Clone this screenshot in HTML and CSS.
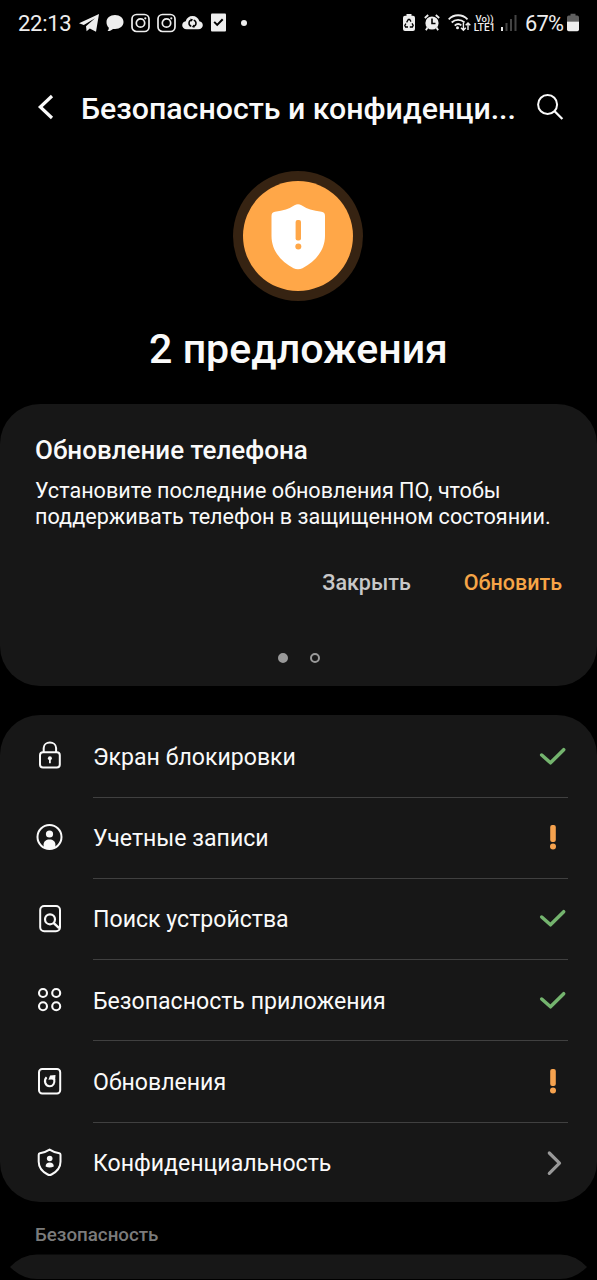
FILE: index.html
```html
<!DOCTYPE html>
<html lang="ru">
<head>
<meta charset="utf-8">
<title>Безопасность и конфиденциальность</title>
<link rel="stylesheet" href="styles.css">
</head>
<body>
<div class="screen">
  <div class="status">
    <span class="time">22:13</span>
    <svg class="telegram" width="20" height="20" viewBox="0 0 20 20"><path fill="currentColor" d="M0 10.300 20 1l-3 17.700-6.200-3.300-3.200 2.800-.6-5L16 5.300 4.800 12z"/></svg>
    <svg class="chat" width="18" height="20" viewBox="0 0 18 20"><path fill="currentColor" d="M9 2c5 0 8.500 3 8.500 7s-3.500 7-8.500 7L7 15.900C5.500 17.300 3.500 18.200 1.500 18c1-1 1.500-2.200 1.200-3.500C1.200 13.200.5 11.300.5 9 .5 5 4 2 9 2z"/></svg>
    <svg class="insta" width="19" height="20" viewBox="0 0 19 20"><g fill="none" stroke="currentColor" stroke-width="1.700"><rect x="1" y="1.500" width="17" height="17" rx="4.500"/><circle cx="9.500" cy="10" r="4.200"/></g><circle cx="14.300" cy="5.300" r="1.100" fill="currentColor"/></svg>
    <svg class="insta" width="19" height="20" viewBox="0 0 19 20"><g fill="none" stroke="currentColor" stroke-width="1.700"><rect x="1" y="1.500" width="17" height="17" rx="4.500"/><circle cx="9.500" cy="10" r="4.200"/></g><circle cx="14.300" cy="5.300" r="1.100" fill="currentColor"/></svg>
    <svg class="cloud" width="21" height="20" viewBox="0 0 21 20"><path fill="currentColor" d="M4.700 16.200C2 16.200.2 14.500.2 12.200c0-2.200 1.500-3.600 3.500-3.900C4.500 5 7.200 3 10.500 3s6 2 6.800 5.300c2 .3 3.500 1.700 3.500 3.900 0 2.300-1.800 4-4.500 4z"/><path fill="none" stroke="#000" stroke-width="1.500" d="M9.500 6.900c-3.300.7-3.300 5.400-.2 6.300M11.500 13.400c3.300-.7 3.300-5.400.2-6.300"/><path d="M8.400 5.600l2.700.8-1.800 2.400zM12.600 14.700l-2.700-.8 1.800-2.400z"/></svg>
    <svg class="clip" width="15" height="20" viewBox="0 0 15 20"><path fill="currentColor" d="M1 .5h13q1 0 1 1V17.500q0 1-1 1H1q-1 0-1-1V1.500q0-1 1-1z"/><path fill="none" stroke="#000" stroke-width="2" d="m3.200 8.900 3 3 5.500-5.700"/></svg>
    <i class="more"></i>
    <span class="spacer"></span>
    <svg class="saver" width="12" height="20" viewBox="0 0 12 20"><path fill="currentColor" d="M3.500 1h5v1.800H10q2 0 2 2V16q0 2-2 2H2q-2 0-2-2V4.800q0-2 2-2h1.500z"/><path fill="none" stroke="#000" stroke-width="1.300" d="m3.600 9.300 1.700-2.800h1.400l1.300 2.200M9 10.300l1.200 2-.8 1.700H6.800M5 14H2.600l-.8-1.500 1.100-1.900"/></svg>
    <svg class="alarm" width="16" height="20" viewBox="0 0 16 20"><circle cx="8" cy="10" r="6.600" fill="currentColor"/><path stroke="currentColor" stroke-width="1.800" d="m.8 5 3.400-3M15.200 5l-3.400-3M3.500 14.500l-1.600 2.800M12.500 14.500l1.600 2.800"/><path fill="none" stroke="#000" stroke-width="1.600" d="M8 5.500v5h3.500"/></svg>
    <svg class="wifi" width="23" height="20" viewBox="0 0 23 20"><g fill="none" stroke="currentColor" stroke-width="1.800"><path d="M.7 6.300c5.200-5.400 13.600-5.400 18.800 0M3.700 9.500c3.600-3.600 9.200-3.600 12.800 0M6.700 12.600c2-1.800 4.800-1.800 6.700-.2"/></g><circle cx="9.500" cy="14.800" r="1.500" fill="currentColor"/><path fill="none" stroke="currentColor" stroke-width="1.400" d="M15.400 10v7M13 14.700l2.400 2.500 2.400-2.500M20 17v-7M17.700 12.300l2.300-2.400 2.300 2.400"/></svg>
    <span class="volte"><span class="vo">Vo))</span><span class="lte">LTE1</span></span>
    <svg class="signal" width="16" height="20" viewBox="0 0 16 20"><path fill="currentColor" d="M0 14h2v4H0z"/><path fill="#444" d="M4.500 10h2v8h-2zM9 6h2v12H9zM13.500 2h2v16h-2z"/></svg>
    <span class="percent">67%</span>
    <svg class="battery" width="12" height="20" viewBox="0 0 12 20"><path fill="#606060" d="M3.500.8h5v1.800h1.700q1.800 0 1.800 2V8.500H0V4.600q0-2 1.800-2h1.700z"/><path fill="currentColor" d="M0 8.500h12v8q0 1.700-1.700 1.700H1.700Q0 18.200 0 16.500z"/></svg>
  </div>

  <header class="header">
    <svg class="back" width="20" height="30" viewBox="0 0 20 30"><path fill="none" stroke="currentColor" stroke-width="3.200" d="M18 4 6.300 15 18 26"/></svg>
    <h1>Безопасность и конфиденци...</h1>
    <svg class="search" width="28" height="28" viewBox="0 0 28 28"><circle cx="11.600" cy="11.500" r="9.500" fill="none" stroke="currentColor" stroke-width="2"/><path stroke="currentColor" stroke-width="2.300" d="m18.600 18.200 7.800 7.800"/></svg>
  </header>

  <section class="summary">
    <svg width="130" height="130" viewBox="0 0 130 130"><circle cx="65" cy="65" r="65" fill="#362312"/><circle cx="65" cy="65" r="55" fill="#ffa748"/><path fill="#fff" d="M61.500 34.300Q65 32 68.500 34.300 76 39.500 88.500 40.800 92 41.200 92 45v20c0 14-9.500 25.500-22.500 32.200q-4.500 2.300-9 0C47.500 90.500 38.500 79 38.500 65V45q0-3.800 3.500-4.200Q54 39.500 61.500 34.300z"/><rect x="62.600" y="49" width="5.400" height="20.500" rx="2" fill="#ffa748"/><circle cx="65.300" cy="75.600" r="3" fill="#ffa748"/></svg>
    <h2>2 предложения</h2>
  </section>

  <section class="card update">
    <h3>Обновление телефона</h3>
    <p>Установите последние обновления ПО, чтобы<br>поддерживать телефон в защищенном состоянии.</p>
    <div class="actions"><button class="dismiss">Закрыть</button><button class="accept">Обновить</button></div>
    <div class="pager"><i class="page current"></i><i class="page"></i></div>
  </section>

  <ul class="card list">
    <li>
      <svg class="lead" viewBox="0 0 30 30"><g fill="none" stroke="currentColor" stroke-width="2"><rect x="5" y="11.300" width="19.800" height="15.300" rx="3"/><path d="M8.700 11.300V7c0-7.200 12.400-7.200 12.400 0v4.300"/></g><circle cx="14.900" cy="17.300" r="2" fill="currentColor"/><path stroke="currentColor" stroke-width="1.800" d="M14.900 18v4.200"/></svg>
      <div class="row"><span>Экран блокировки</span><svg class="mark"><use href="#check"/></svg></div>
    </li>
    <li>
      <svg class="lead" viewBox="0 0 30 30"><circle cx="14.500" cy="15" r="12" fill="none" stroke="currentColor" stroke-width="2"/><circle cx="14.500" cy="12" r="3.600" fill="currentColor"/><path fill="currentColor" d="M8.600 25.300v-2.800c0-3 2.500-5 5.900-5s5.900 2 5.900 5v2.800Q14.500 28.500 8.600 25.300z"/></svg>
      <div class="row"><span>Учетные записи</span><svg class="mark"><use href="#alert"/></svg></div>
    </li>
    <li>
      <svg class="lead" viewBox="0 0 30 30"><g fill="none" stroke="currentColor" stroke-width="2"><rect x="5.200" y="2" width="19.800" height="25.300" rx="4"/><circle cx="15" cy="15.300" r="5" stroke-width="2.200"/><path stroke-width="2.400" d="m18.500 18.800 5.700 5.400"/></g></svg>
      <div class="row"><span>Поиск устройства</span><svg class="mark"><use href="#check"/></svg></div>
    </li>
    <li>
      <svg class="lead" viewBox="0 0 30 30"><g fill="none" stroke="currentColor" stroke-width="2.100"><circle cx="8" cy="8" r="4"/><circle cx="21.200" cy="8" r="4"/><circle cx="8" cy="21.200" r="4"/><circle cx="21.200" cy="21.200" r="4"/></g></svg>
      <div class="row"><span>Безопасность приложения</span><svg class="mark"><use href="#check"/></svg></div>
    </li>
    <li>
      <svg class="lead" viewBox="0 0 30 30"><rect x="4" y="3" width="21.200" height="24.500" rx="3.200" fill="none" stroke="currentColor" stroke-width="2"/><path fill="none" stroke="currentColor" stroke-width="2.100" d="M11.600 11.200c-3.200 3.200-1.400 9.100 3.100 9.100 3.400 0 5.300-3.200 4.500-7"/><path fill="currentColor" d="m20.500 8.900-5.400.6-1.700 4.300 3-.4 3.700.9z"/></svg>
      <div class="row"><span>Обновления</span><svg class="mark"><use href="#alert"/></svg></div>
    </li>
    <li>
      <svg class="lead" viewBox="0 0 30 30"><path fill="none" stroke="currentColor" stroke-width="2" d="M14.600 2.700Q19 5.600 24.300 6.200q1.200.2 1.200 1.500v7c0 6-4.200 10.300-9 12.800q-1.900 1-3.800 0c-4.800-2.500-9-6.800-9-12.800v-7q0-1.300 1.200-1.500Q10.200 5.600 14.600 2.700z"/><circle cx="14.700" cy="11.500" r="2.800" fill="currentColor"/><path fill="currentColor" d="M10.600 19.500c0-2.600 1.600-4 4.100-4s4.100 1.400 4.100 4q-4.100 1.800-8.200 0z"/></svg>
      <div class="row"><span>Конфиденциальность</span><svg class="mark" viewBox="0 0 30 30"><path fill="none" stroke="#999" stroke-width="3.200" stroke-linecap="round" stroke-linejoin="round" d="m11.300 5 10.200 10.200L11.300 25.400"/></svg></div>
    </li>
  </ul>

  <h4>Безопасность</h4>
  <svg class="next" width="597" height="26" viewBox="0 0 597 26"><path fill="#171717" d="M10 13Q22 .5 37 .5H560Q575 .5 587 13 575 25 560 25H37Q22 25 10 13z"/></svg>
</div>

<svg class="defs" width="0" height="0">
  <symbol id="check" viewBox="0 0 30 30"><path fill="none" stroke="#74b46e" stroke-width="3.500" stroke-linecap="round" stroke-linejoin="round" d="m3.700 13 8.800 7.800L25.700 7.700"/></symbol>
  <symbol id="alert" viewBox="0 0 30 30"><rect x="12.200" y="2" width="5.600" height="17" rx="2" fill="#f6a24e"/><circle cx="15" cy="23.400" r="3" fill="#f6a24e"/></symbol>
</svg>
</body>
</html>
```
FILE: styles.css
```css
* { box-sizing: border-box; margin: 0; padding: 0; }
body { background: #000; color: #fafafa; font-family: Roboto, "Noto Sans", sans-serif; overflow: hidden; }
svg { display: block; flex: none; }
.screen { width: 597px; height: 1280px; overflow: hidden; display: flex; flex-direction: column; }

.status { height: 46px; flex: none; display: flex; align-items: center; padding: 0 18px; color: #eee; }
.time { width: 61px; font-size: 22px; letter-spacing: -0.3px; white-space: nowrap; }
.chat { margin-left: 7px; }
.insta { margin-left: 7px; }
.cloud { margin-left: 6px; }
.clip { margin-left: 8px; }
.more { width: 6px; height: 6px; border-radius: 50%; background: #eee; margin-left: 15px; }
.spacer { flex: 1; }
.alarm { margin-left: 9px; }
.wifi { margin-left: 8px; }
.volte { width: 23px; margin: 0 5px 0 2px; display: flex; flex-direction: column; align-items: center; line-height: 9px; font-weight: 500; white-space: nowrap; }
.vo { font-size: 9.5px; }
.lte { font-size: 10px; }
.percent { margin-left: 8px; width: 41px; font-size: 21.8px; letter-spacing: -0.8px; white-space: nowrap; }
.battery { margin-left: 1px; }

.header { height: 125px; flex: none; padding: 46px 32px 0 34px; display: flex; align-items: flex-start; }
.header h1 { margin: 0 0 0 27px; width: 455px; font-size: 30.3px; line-height: 34px; font-weight: 500; white-space: nowrap; }
.search { margin-top: 1px; }

.summary { height: 233px; flex: none; display: flex; flex-direction: column; align-items: center; }
.summary svg { margin-right: 1px; }
.summary h2 { margin-top: 23px; font-size: 41.1px; line-height: 50px; font-weight: 500; white-space: nowrap; }

.card { background: #171717; border-radius: 40px; flex: none; }
.update { height: 282px; padding: 31px 35px 0; }
.update h3 { font-size: 26px; line-height: 30px; font-weight: 500; white-space: nowrap; }
.update p { margin-top: 13px; font-size: 21.6px; line-height: 26px; white-space: nowrap; }
.actions { display: flex; justify-content: flex-end; gap: 53px; margin-top: 39px; }
button { border: 0; background: none; font: 500 21.5px/28px Roboto, sans-serif; }
.dismiss { color: #c8c8c8; }
.accept { color: #f6a547; }
.pager { display: flex; justify-content: center; gap: 22px; margin-top: 56px; }
.page { width: 10px; height: 10px; border-radius: 50%; border: 2px solid #999; }
.current { background: #999; }

.list { margin-top: 29px; height: 487px; list-style: none; }
.list li { height: 81.25px; display: flex; align-items: flex-start; padding: 0 29px 0 35px; }
.lead { width: 30px; height: 30px; margin-top: 26px; }
.row { flex: 1; height: 82.5px; margin-left: 28px; padding: 2px 0 0; display: flex; align-items: center; justify-content: space-between; border-bottom: 1.5px solid #404040; font-size: 23.1px; white-space: nowrap; }
.row span { padding-top: 1px; }
.list li:last-child .row { border-color: transparent; }
.mark { width: 30px; height: 30px; }

h4 { color: #7b7b7b; font-size: 18.75px; line-height: 24px; font-weight: 500; padding-left: 35px; margin-top: 21px; }
.next { margin-top: 7px; }
.defs { position: absolute; }
```
